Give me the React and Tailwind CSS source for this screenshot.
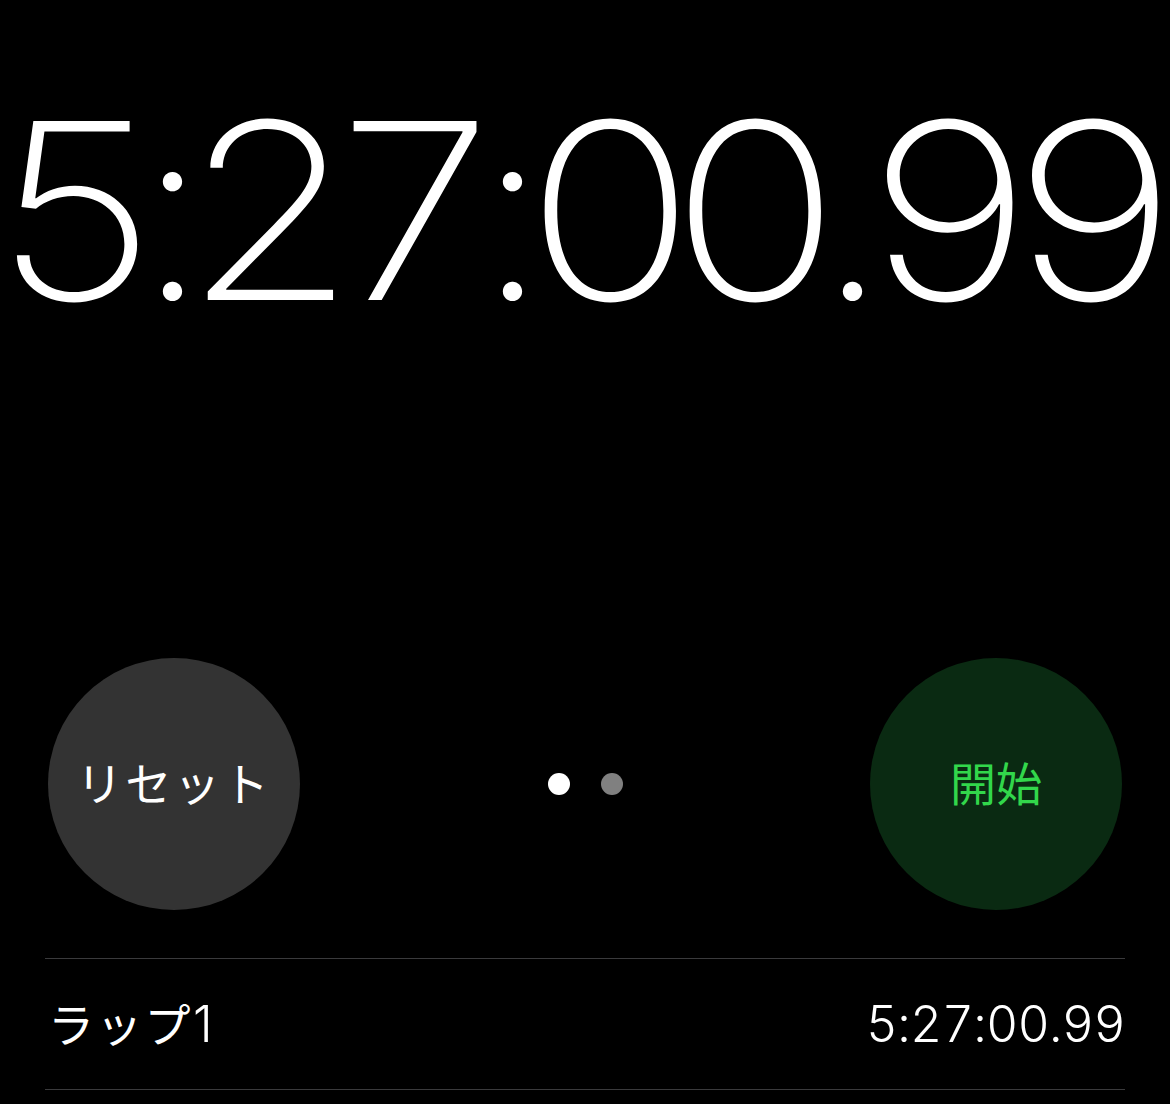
const chars = "5:27:00.99".split("");

function BigTime() {
  return (
    <div className="flex justify-center text-[246px] leading-none font-extralight whitespace-nowrap">
      {chars.map((c, i) => {
        const sep = c === ":" || c === ".";
        return (
          <span
            key={i}
            className={sep ? "w-[50px] flex justify-center" : "w-[145px] flex justify-center"}
          >
            <span className={sep ? "inline-block" : "inline-block scale-x-[1.14]"}>{c}</span>
          </span>
        );
      })}
    </div>
  );
}

export default function App() {
  const jp = { fontFamily: 'Inter, "Noto Sans CJK JP", sans-serif' };
  return (
    <div className="min-h-[1104px] w-full bg-black text-white overflow-hidden" style={jp}>
      <div className="h-[658px] pt-[88px]">
        <BigTime />
      </div>
      <div className="flex items-center justify-between px-[48px] h-[252px]">
        <div className="w-[252px] h-[252px] rounded-full bg-[#333333] flex items-center justify-center text-[46px] tracking-[0.06em]">
          リセット
        </div>
        <div className="flex items-center gap-[31px]">
          <div className="w-[22px] h-[22px] rounded-full bg-white" />
          <div className="w-[22px] h-[22px] rounded-full bg-[#808080]" />
        </div>
        <div className="w-[252px] h-[252px] rounded-full bg-[#0a2a12] flex items-center justify-center text-[46px] text-[#32d74b]">
          開始
        </div>
      </div>
      <div className="mx-[45px] mt-[48px] border-t border-b border-[#3a3a3c] h-[132px] flex items-center justify-between">
        <span className="text-[46px] tracking-[0.05em] pl-[3px]">
          ラップ<span className="text-[50px] font-light">1</span>
        </span>
        <span className="text-[50px] tabular-nums tracking-[-0.015em] font-light">5:27:00.99</span>
      </div>
    </div>
  );
}
